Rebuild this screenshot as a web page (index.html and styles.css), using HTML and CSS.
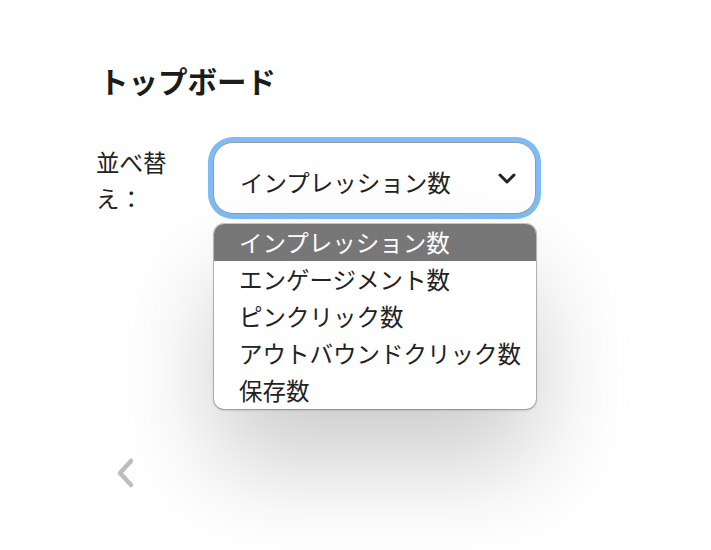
FILE: index.html
```html
<!DOCTYPE html>
<html lang="ja">
<head>
    <meta charset="UTF-8">
    <meta name="viewport" content="width=device-width, initial-scale=1.0">
    <title>トップボード</title>
    <link rel="stylesheet" href="styles.css">
</head>
<body>
    <div class="board">
        <h1 class="board-title">トップボード</h1>

        <div class="sort-row">
            <label class="sort-label" for="sort-select">並べ替え：</label>

            <div class="select-wrap">
                <div class="select" id="sort-select">
                    <span class="select-value">インプレッション数</span>
                    <svg class="select-arrow" width="20" height="12" viewBox="0 0 20 12">
                        <path d="M3 2 L10 9 L17 2" fill="none" stroke="#222" stroke-width="3" stroke-linecap="round" stroke-linejoin="round"/>
                    </svg>
                </div>

                <ul class="options">
                    <li class="option selected">インプレッション数</li>
                    <li class="option">エンゲージメント数</li>
                    <li class="option">ピンクリック数</li>
                    <li class="option">アウトバウンドクリック数</li>
                    <li class="option">保存数</li>
                </ul>
            </div>
        </div>

        <div class="pager">
            <svg class="pager-prev" width="22" height="32" viewBox="0 0 22 32">
                <path d="M16 4 L5 16 L16 28" fill="none" stroke="#bdbdbd" stroke-width="4.5" stroke-linecap="round" stroke-linejoin="round"/>
            </svg>
        </div>
    </div>
</body>
</html>
```

FILE: styles.css
```css
html, body {
    min-height: 100vh;
}
body {
    margin: 0;
    background-color: white;
    font-family: "Noto Sans CJK JP", "Noto Sans", sans-serif;
    color: #222;
}
.board {
    padding: 60px 0 0 96px;
}
.board-title {
    margin: 0 0 0 3px;
    font-size: 29.5px;
    line-height: 40px;
    font-weight: bold;
    color: #1b1b1b;
}
.sort-row {
    display: flex;
    align-items: flex-start;
    gap: 37px;
    margin-top: 42px;
}
.sort-label {
    width: 80px;
    font-size: 23.5px;
    line-height: 36px;
    margin-top: 2px;
}
.select-wrap {
    position: relative;
}
.select {
    display: flex;
    align-items: center;
    justify-content: space-between;
    box-sizing: border-box;
    width: 323px;
    height: 72px;
    padding: 8px 18px 0 26px;
    border: 1px solid #9a9a9a;
    border-radius: 20px;
    box-shadow: 0 0 0 5px #7dbcf7;
    font-size: 23.5px;
    background-color: white;
}
.select-arrow {
    margin-top: -6px;
}
.options {
    position: absolute;
    top: 82px;
    left: 1px;
    width: 322px;
    margin: 0;
    padding: 0;
    list-style: none;
    background-color: white;
    border-radius: 10px;
    overflow: hidden;
    box-shadow: 0 0 0 1px rgba(0,0,0,0.2), 0 1px 3px rgba(0,0,0,0.2), 0 55px 100px rgba(0,0,0,0.2);
}
.option {
    height: 37px;
    line-height: 37px;
    padding-left: 25px;
    font-size: 23.5px;
    color: #222;
    white-space: nowrap;
}
.option.selected {
    background-color: #777777;
    color: white;
}
.pager {
    margin-top: 241px;
    padding-left: 19px;
}
.pager-prev {
    display: block;
}
```
